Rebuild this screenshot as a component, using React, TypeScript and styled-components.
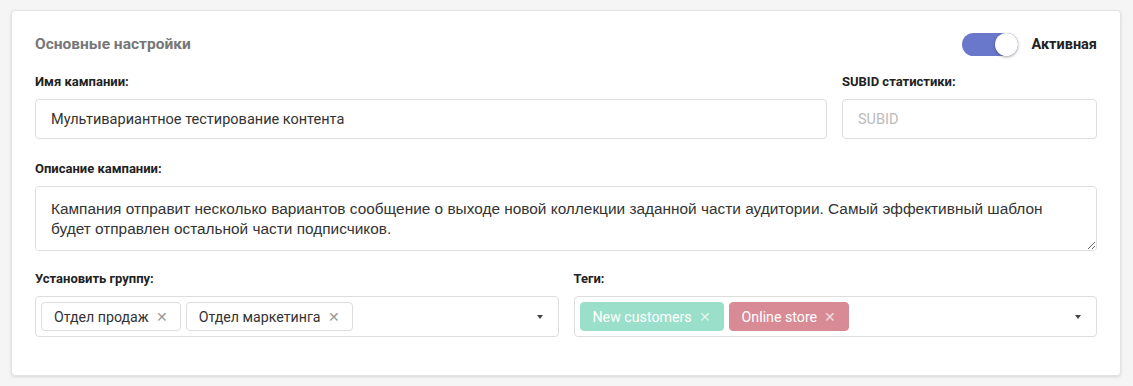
import React from 'react';
import styled, { createGlobalStyle } from 'styled-components';

const GlobalCss = createGlobalStyle`
  html, body {
    margin: 0;
    padding: 0;
    background: #f5f5f5;
  }
  body {
    font-family: Roboto, 'Noto Sans', sans-serif;
    color: #333;
  }
  * { box-sizing: border-box; }
`;

const PageCss = styled.div`
  padding: 10px 12px 10px 11px;
  width: 1133px;
  height: 386px;
`;

const CardCss = styled.div`
  background: #fff;
  border: 1px solid #e3e3e3;
  border-radius: 4px;
  box-shadow: 0 1px 3px rgba(0, 0, 0, 0.12);
  padding: 17px 23px 38px;
`;

const HeaderCss = styled.div`
  display: flex;
  align-items: center;
  justify-content: space-between;
  height: 32px;
  margin-bottom: 13px;
`;

const TitleCss = styled.h3`
  margin: 0;
  font-size: 15.5px;
  font-weight: 700;
  color: #777;
`;

const SwitchWrapCss = styled.label`
  display: flex;
  align-items: center;
  gap: 13px;
  font-size: 14.5px;
  font-weight: 700;
  color: #222;
`;

const TrackCss = styled.span<{ $on: boolean }>`
  position: relative;
  width: 56px;
  height: 23px;
  border-radius: 12px;
  background: ${p => (p.$on ? '#6a78cc' : '#ccc')};
`;

const KnobCss = styled.span<{ $on: boolean }>`
  position: absolute;
  top: 0;
  ${p => (p.$on ? 'right: 0;' : 'left: 0;')}
  width: 23px;
  height: 23px;
  border-radius: 50%;
  background: #fff;
  box-shadow: 0 1px 3px rgba(0, 0, 0, 0.35);
`;

const RowCss = styled.div<{ $cols: string; $mb: number }>`
  display: grid;
  grid-template-columns: ${p => p.$cols};
  gap: 15px;
  margin-bottom: ${p => p.$mb}px;
`;

const FieldCss = styled.div`
  display: flex;
  flex-direction: column;
`;

const LabelCss = styled.label`
  font-size: 13px;
  font-weight: 700;
  color: #222;
  height: 18px;
  line-height: 18px;
  margin-bottom: 8px;
`;

const InputCss = styled.input`
  height: 40px;
  border: 1px solid #ddd;
  border-radius: 4px;
  padding: 0 15px;
  font-family: Roboto, 'Noto Sans', sans-serif;
  font-size: 14.5px;
  color: #333;
  outline: none;
  &::placeholder { color: #bbb; }
`;

const TextAreaCss = styled.textarea`
  height: 65px;
  border: 1px solid #ddd;
  border-radius: 4px;
  padding: 12px 15px;
  font-family: 'Liberation Sans', Arial, sans-serif;
  font-size: 15.4px;
  line-height: 20px;
  color: #333;
  resize: vertical;
  outline: none;
`;

const SelectCss = styled.div`
  display: flex;
  align-items: center;
  height: 41px;
  border: 1px solid #ddd;
  border-radius: 4px;
  padding: 0 15px 0 5px;
`;

const ChipsCss = styled.div`
  display: flex;
  gap: 5px;
  flex: 1;
`;

const ChipCss = styled.span<{ $bg?: string }>`
  display: inline-flex;
  align-items: center;
  gap: 7px;
  height: 29px;
  padding: 0 12px;
  border-radius: 4px;
  font-size: 14.2px;
  background: ${p => p.$bg || '#fff'};
  color: ${p => (p.$bg ? '#fff' : '#333')};
  border: 1px solid ${p => (p.$bg ? p.$bg : '#ddd')};
`;

const CrossCss = styled.span<{ $light?: boolean }>`
  font-size: 14px;
  line-height: 1;
  color: ${p => (p.$light ? 'rgba(255,255,255,0.7)' : '#999')};
`;

const CaretCss = styled.span`
  width: 0;
  height: 0;
  border-left: 3.5px solid transparent;
  border-right: 3.5px solid transparent;
  border-top: 4px solid #444;
`;

type Chip = { label: string; bg?: string };

function MultiSelect({ chips }: { chips: Chip[] }) {
  return (
    <SelectCss>
      <ChipsCss>
        {chips.map(c => (
          <ChipCss key={c.label} $bg={c.bg}>
            {c.label}
            <CrossCss $light={!!c.bg}>✕</CrossCss>
          </ChipCss>
        ))}
      </ChipsCss>
      <CaretCss />
    </SelectCss>
  );
}

export default function App() {
  return (
    <PageCss>
      <GlobalCss />
      <CardCss>
        <HeaderCss>
          <TitleCss>Основные настройки</TitleCss>
          <SwitchWrapCss>
            <TrackCss $on>
              <KnobCss $on />
            </TrackCss>
            Активная
          </SwitchWrapCss>
        </HeaderCss>
        <RowCss $cols="1fr 255px" $mb={21}>
          <FieldCss>
            <LabelCss>Имя кампании:</LabelCss>
            <InputCss defaultValue="Мультивариантное тестирование контента" />
          </FieldCss>
          <FieldCss>
            <LabelCss>SUBID статистики:</LabelCss>
            <InputCss placeholder="SUBID" />
          </FieldCss>
        </RowCss>
        <RowCss $cols="1fr" $mb={19}>
          <FieldCss>
            <LabelCss>Описание кампании:</LabelCss>
            <TextAreaCss defaultValue="Кампания отправит несколько вариантов сообщение о выходе новой коллекции заданной части аудитории. Самый эффективный шаблон будет отправлен остальной части подписчиков." />
          </FieldCss>
        </RowCss>
        <RowCss $cols="1fr 1fr" $mb={0}>
          <FieldCss>
            <LabelCss>Установить группу:</LabelCss>
            <MultiSelect chips={[{ label: 'Отдел продаж' }, { label: 'Отдел маркетинга' }]} />
          </FieldCss>
          <FieldCss>
            <LabelCss>Теги:</LabelCss>
            <MultiSelect
              chips={[
                { label: 'New customers', bg: '#9adfc9' },
                { label: 'Online store', bg: '#d98b95' },
              ]}
            />
          </FieldCss>
        </RowCss>
      </CardCss>
    </PageCss>
  );
}
